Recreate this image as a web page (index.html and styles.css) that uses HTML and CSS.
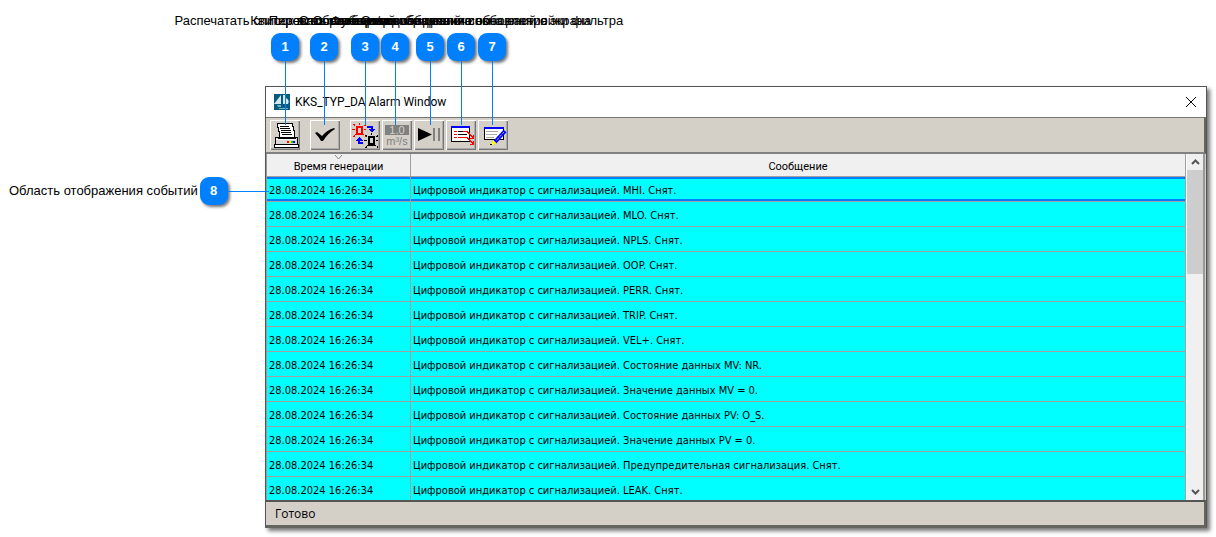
FILE: index.html
```html
<!DOCTYPE html>
<html lang="ru">
<head>
<meta charset="utf-8">
<title>KKS_TYP_DA Alarm Window</title>
<link rel="stylesheet" href="styles.css">
</head>
<body>
<main class="window">
  <header class="titlebar">
    <svg class="logo" viewBox="0 0 16 16" aria-hidden="true"><path fill="#075b7d" d="M0 0h16v16H0z"/><path fill="#d5e8ee" d="M0 10 7 1v9zM9 1h2v9H9zM12 4q4 2 2 6h-2z"/><path fill="#72afc3" d="M3 11h4v2H4zM5 14h9v1H5z"/></svg>
    <h1 class="title">KKS_TYP_DA Alarm Window</h1>
    <button class="close" aria-label="Закрыть"><svg width="12" height="12" viewBox="0 0 12 12"><path d="m1 1 10 10M11 1 1 11" stroke="#000" fill="none"/></svg></button>
  </header>
  <div class="toolbar">
    <button class="tool" aria-label="Распечатать"><svg viewBox="0 0 30 30" shape-rendering="crispEdges">
      <path d="M7 3h15v3h1v4h1v7H9V11H8V7H7z" fill="#fff" stroke="#000"/>
      <path d="M10 6h9M10 8h10M11 10h10M11 12h10M12 14h10" stroke="#000" transform="translate(0 .5)"/>
      <path d="M5 17h3v1h17v-1h2v7H5z" fill="#d8d8d8" stroke="#000"/>
      <path d="M6 19h20v1H6z" fill="#fff"/><path d="M4 24h24v3H4z" fill="#fff" stroke="#000"/>
      <path d="M17 21h2v2h-2z" fill="red"/><path d="M19 21h2v2h-2z" fill="#ff0"/><path d="M21 21h2v2h-2z" fill="#0c0"/><path d="M23 21h2v2h-2z" fill="#00f"/></svg></button>
    <button class="tool" aria-label="Квитировать"><svg viewBox="0 0 30 30"><path d="m5 13 2-1 5 4q5-6 12-8l1 1q-7 4-12 12h-2q-2-4-6-8z"/></svg></button>
    <div class="group">
      <button class="tool" aria-label="Переключить"><svg viewBox="0 0 30 30" shape-rendering="crispEdges" fill="none">
        <path stroke="red" stroke-width="2" d="M7 7h5v7H7z"/><path stroke="red" d="M5 14.500h9M3 4h1v1h1M9.500 3v2M16 4h-1v1h-1M2 9.500h3M14 9.500h2M3 16h1v-1M16 16h-1v-1"/>
        <path stroke="#000" stroke-width="2" d="M19 17h5v7h-5z"/><path stroke="#000" d="M17 25.500h9M15 15h1v1h1M21.500 13v2M28 15h-1v1h-1M14 20.500h3M26 20.500h2M15 27h1v-1M28 27h-1v-1"/>
        <path stroke="#00f" stroke-width="2" d="M17 7h5v3M13 23H9v-3"/><path fill="#00f" d="M18 9h7l-3 4zM6 21h7l-4-4z"/></svg></button>
      <button class="tool" aria-label="Единицы измерения"><svg viewBox="0 0 30 30"><path fill="#808080" d="M3 5h24v10H3z"/><text class="unit" x="15" y="14" fill="#d4d0c8">1.0</text><text class="unit" x="15" y="25" fill="#808080">m³/s</text></svg></button>
      <button class="tool" aria-label="Пуск и пауза"><svg viewBox="0 0 30 30"><path d="M4 8v13l14-6.500z"/><path fill="#808080" d="M19 8h2v13h-2zM24 8h2v13h-2z"/></svg></button>
      <button class="tool" aria-label="Список"><svg viewBox="0 0 30 30" shape-rendering="crispEdges" fill="none">
        <path fill="#fff" stroke="#000" d="M5.500 6.500h18v15h-18z"/><path fill="#00f" d="M5 6h19v2H5z"/><path stroke="#000" d="M12 11.500h9M12 14.500h9M12 17.500h9"/>
        <path stroke="red" d="M8 11.500h3M8 14.500h3M8 17.500h3M17 11.500h4l6 6M12 17.500h9l6 6M27.500 15v3H24M27.500 21v3H24"/></svg></button>
      <button class="tool" aria-label="Фильтр"><svg viewBox="0 0 30 30">
        <g shape-rendering="crispEdges"><path fill="#fff" stroke="#000" d="M6.500 7.500h19v12h-19z"/><path fill="#00f" d="M6 7h20v2H6z"/><path stroke="#aaa" d="M8 11.500h12M8 14.500h11M8 17.500h8"/></g>
        <path stroke="#00f" stroke-width="4" d="m27 11-10 11"/><path stroke="#fff" stroke-dasharray="1 1" d="m26 12-8 9"/><path fill="#ff0" d="m15 20 3 3-3 2h-2z"/><path d="M12 24h2v1h-2z"/></svg></button>
    </div>
  </div>
  <section class="events">
    <table class="table">
      <thead><tr><th class="time"><svg class="sort" width="9" height="5" viewBox="0 0 9 5" aria-hidden="true"><path d="m1 0 3.500 4L8 0" fill="none" stroke="#888"/></svg>Время генерации</th><th>Сообщение</th></tr></thead>
      <tbody>
        <tr class="selected"><td>28.08.2024 16:26:34</td><td>Цифровой индикатор с сигнализацией. MHI. Снят.</td></tr>
        <tr><td>28.08.2024 16:26:34</td><td>Цифровой индикатор с сигнализацией. MLO. Снят.</td></tr>
        <tr><td>28.08.2024 16:26:34</td><td>Цифровой индикатор с сигнализацией. NPLS. Снят.</td></tr>
        <tr><td>28.08.2024 16:26:34</td><td>Цифровой индикатор с сигнализацией. OOP. Снят.</td></tr>
        <tr><td>28.08.2024 16:26:34</td><td>Цифровой индикатор с сигнализацией. PERR. Снят.</td></tr>
        <tr><td>28.08.2024 16:26:34</td><td>Цифровой индикатор с сигнализацией. TRIP. Снят.</td></tr>
        <tr><td>28.08.2024 16:26:34</td><td>Цифровой индикатор с сигнализацией. VEL+. Снят.</td></tr>
        <tr><td>28.08.2024 16:26:34</td><td>Цифровой индикатор с сигнализацией. Состояние данных MV: NR.</td></tr>
        <tr><td>28.08.2024 16:26:34</td><td>Цифровой индикатор с сигнализацией. Значение данных MV = 0.</td></tr>
        <tr><td>28.08.2024 16:26:34</td><td>Цифровой индикатор с сигнализацией. Состояние данных PV: O_S.</td></tr>
        <tr><td>28.08.2024 16:26:34</td><td>Цифровой индикатор с сигнализацией. Значение данных PV = 0.</td></tr>
        <tr><td>28.08.2024 16:26:34</td><td>Цифровой индикатор с сигнализацией. Предупредительная сигнализация. Снят.</td></tr>
        <tr><td>28.08.2024 16:26:34</td><td>Цифровой индикатор с сигнализацией. LEAK. Снят.</td></tr>
      </tbody>
    </table>
    <div class="scrollbar">
      <button class="arrow" aria-label="Вверх"><svg width="9" height="6" viewBox="0 0 9 6"><path d="m1 5 3.500-3.500L8 5" fill="none" stroke="#555" stroke-width="2"/></svg></button>
      <div class="thumb"></div>
      <button class="arrow down" aria-label="Вниз"><svg width="9" height="6" viewBox="0 0 9 6"><path d="m1 1 3.500 3.500L8 1" fill="none" stroke="#555" stroke-width="2"/></svg></button>
    </div>
  </section>
  <footer class="status">Готово</footer>
</main>
<div class="callout c1"><span class="caption">Распечатать список всех сообщений</span><b class="badge">1</b></div>
<div class="callout c2"><span class="caption">Квитировать сообщения</span><b class="badge">2</b></div>
<div class="callout c3"><span class="caption">Переключение типа сообщений</span><b class="badge">3</b></div>
<div class="callout c4"><span class="caption">Отображение единиц величины</span><b class="badge">4</b></div>
<div class="callout c5"><span class="caption">Остановка/возобновление обновления</span><b class="badge">5</b></div>
<div class="callout c6"><span class="caption">Функция отображения сообщений с экрана</span><b class="badge">6</b></div>
<div class="callout c7"><span class="caption">Открытие диалога окна настройки фильтра</span><b class="badge">7</b></div>
<div class="callout side"><span class="caption">Область отображения событий</span><b class="badge">8</b></div>
</body>
</html>
```

FILE: styles.css
```css
* { box-sizing: border-box; }
body {
  margin: 0;
  padding: 86px 9px 9px 265px;
  position: relative;
  background: #fff;
  color: #000;
  font-family: "Liberation Sans", Arial, sans-serif;
  font-size: 13px;
}
button { padding: 0; border: 0; background: none; font: inherit; }
svg { display: block; }

.window {
  border: 1px solid #555;
  border-bottom: 3px solid #656560;
  background: #d4d0c8;
  box-shadow: 3px 3px 4px #777;
}
.titlebar {
  display: flex;
  align-items: center;
  height: 30px;
  padding: 0 9px 0 8px;
  background: #fff;
}
.logo { width: 16px; height: 16px; }
.title {
  margin: 0 auto 0 5px;
  font: 12px Roboto, "Liberation Sans", sans-serif;
}
.close { display: grid; place-items: center; width: 12px; height: 12px; }

.toolbar {
  display: flex;
  gap: 10px;
  padding: 2px 4px;
  border-top: 1px solid #777;
  border-right: 2px solid #656560;
  border-bottom: 2px solid #808080;
}
.group { display: flex; gap: 2px; }
.tool {
  width: 30px;
  height: 30px;
  background: #d4d0c8;
  box-shadow: inset 1px 1px #fff, inset -1px -1px #777, inset -2px -2px #aaa;
}
.tool svg { width: 30px; height: 30px; }
.unit { font: 11px "Liberation Sans", Arial, sans-serif; text-anchor: middle; }

.events {
  display: flex;
  border-left: 1px solid #999;
  border-right: 1px solid #d4d0c8;
}
.table {
  flex: 1;
  border-collapse: separate;
  border-spacing: 0;
  table-layout: fixed;
  font: 11px/14px "DejaVu Sans Condensed", "DejaVu Sans", sans-serif;
}
th {
  position: relative;
  height: 23px;
  padding: 3px 0 0;
  border-right: 1px solid #a0a0a0;
  border-bottom: 1px solid #a0a0a0;
  background: #f0f0f0;
  font: 11px/14px Roboto, "Liberation Sans", sans-serif;
}
.time { width: 144px; }
.sort { position: absolute; top: 1px; left: 67px; }
td {
  height: 25px;
  padding: 3px 2px 0;
  border-right: 1px solid #a0a0a0;
  border-bottom: 1px solid #a0a0a0;
  background: #0ff;
  white-space: nowrap;
}
.selected td { box-shadow: inset 0 2px #0080ff, inset 0 -2px #0080ff; }
tbody tr:last-child td { height: 23px; padding-top: 4px; border-bottom: 0; }

.scrollbar {
  display: flex;
  flex-direction: column;
  width: 19px;
  border: solid #fff;
  border-width: 0 2px 0 1px;
  border-right-color: #999;
  background: #f0f0f0;
}
.arrow { display: grid; place-items: center; height: 16px; }
.thumb { height: 104px; background: #cdcdcd; }
.down { margin-top: auto; }

.status {
  padding: 4px 9px 3px;
  border-top: 2px solid #555;
  border-right: 2px solid #656560;
  font: 12px/16px "Open Sans", "Noto Sans", sans-serif;
}

.callout {
  position: absolute;
  top: 13px;
  display: flex;
  flex-direction: column;
  align-items: center;
  gap: 4px;
  width: 28px;
  line-height: 16px;
  white-space: nowrap;
}
.callout::after {
  content: "";
  width: 1px;
  height: 64px;
  margin-top: -4px;
  background: #0080ff;
}
.badge {
  flex: none;
  display: grid;
  place-items: center;
  width: 28px;
  height: 28px;
  border-radius: 9px;
  background: #0080ff;
  color: #fff;
  box-shadow: 2px 2px 3px #777;
}
.c1 { left: 271px; }
.c2 { left: 310px; }
.c3 { left: 351px; }
.c4 { left: 381px; }
.c5 { left: 416px; }
.c6 { left: 447px; }
.c7 { left: 478px; }
.side {
  top: 177px;
  left: 9px;
  flex-direction: row;
  gap: 2px;
  width: auto;
}
.side::after { width: 41px; height: 1px; margin: 0 0 0 -2px; }
```
